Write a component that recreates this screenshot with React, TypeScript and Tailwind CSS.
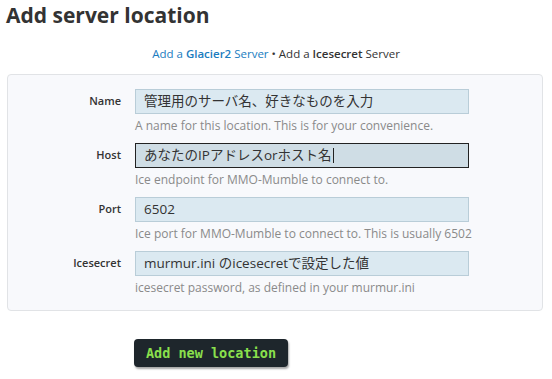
import React from "react";

interface Field {
  label: string;
  value: string;
  help: string;
  focused?: boolean;
}

const FIELDS: Field[] = [
  { label: "Name", value: "管理用のサーバ名、好きなものを入力", help: "A name for this location. This is for your convenience." },
  { label: "Host", value: "あなたのIPアドレスorホスト名", help: "Ice endpoint for MMO-Mumble to connect to.", focused: true },
  { label: "Port", value: "6502", help: "Ice port for MMO-Mumble to connect to. This is usually 6502" },
  { label: "Icesecret", value: "murmur.ini のicesecretで設定した値", help: "icesecret password, as defined in your murmur.ini" },
];

const App = () => {
  return (
    <div className="w-[552px] h-[379px] bg-white text-[#333] overflow-hidden font-['Open_Sans','Noto_Sans_CJK_JP',sans-serif]">
      {/* Heading */}
      <h1 className="pl-[6px] pt-[1px] text-[21px] leading-[28px] font-bold text-[#333]">Add server location</h1>

      {/* Server type switch */}
      <div className="mt-[18px] text-center text-[11.5px] leading-[14px]">
        <span className="text-[#1a7cc0]">
          Add a <b className="font-semibold">Glacier2</b> Server
        </span>
        <span className="text-[#333]"> • Add a <b className="font-semibold">Icesecret</b> Server</span>
      </div>

      {/* Form panel */}
      <div className="mx-[7px] mt-[13px] w-[536px] rounded-[4px] border border-[#e1e3e6] bg-[#f8f9fc] pt-[14px] pb-[14px]">
        <div className="flex flex-col gap-[9px]">
          {FIELDS.map((f) => (
            <div key={f.label} className="flex">
              <label className="w-[113px] pt-[4px] text-right text-[11px] leading-[16px] font-semibold text-[#333]">
                {f.label}
              </label>
              <div className="ml-[14px] flex flex-col">
                <div
                  className={
                    f.focused
                      ? "w-[334px] h-[25px] border border-[#222] bg-[#cfdde5] px-[8px] flex items-center text-[13.5px] text-[#333]"
                      : "w-[334px] h-[25px] border border-[#b9cdd8] bg-[#dbe9f1] px-[8px] flex items-center text-[13.5px] text-[#333]"
                  }
                >
                  {f.value}
                  {f.focused && <span className="ml-[1px] inline-block w-px h-[15px] bg-[#222]" />}
                </div>
                <p className="mt-[4px] text-[12px] leading-[16px] text-[#8a8a8a]">{f.help}</p>
              </div>
            </div>
          ))}
        </div>
      </div>

      {/* Submit */}
      <div className="pl-[134px] mt-[28px]">
        <button className="h-[28px] w-[154px] rounded-[4px] bg-[#1e262c] shadow-[1px_2px_2px_rgba(0,0,0,0.35)] text-[13.5px] font-bold text-[#8ae04c] font-['DejaVu_Sans_Mono',monospace]">
          Add new location
        </button>
      </div>
    </div>
  );
};

export default App;
